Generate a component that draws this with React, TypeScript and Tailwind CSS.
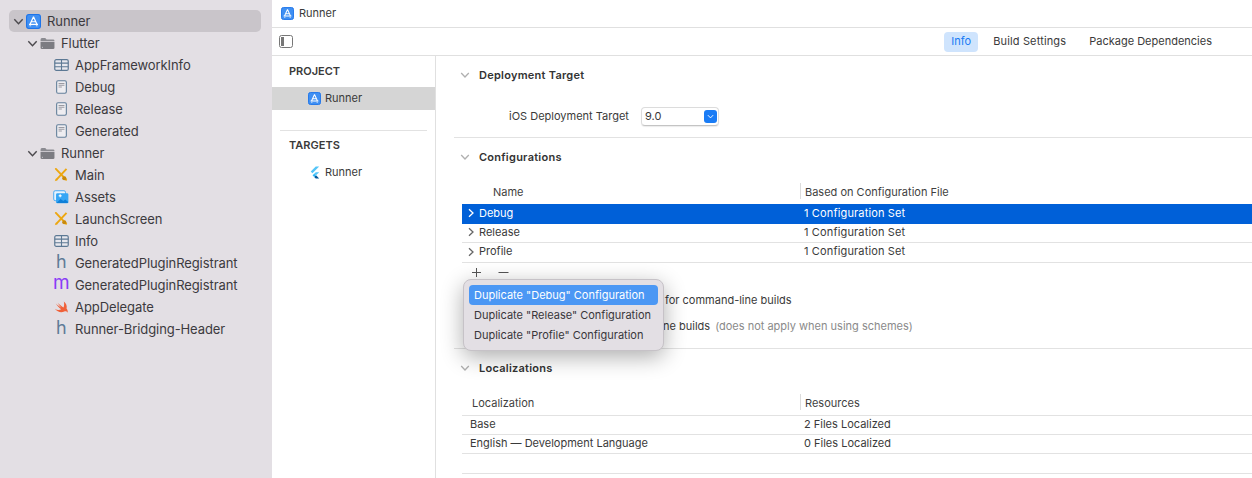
type Kind = 'project' | 'folder' | 'table' | 'doc' | 'xib' | 'assets' | 'h' | 'm' | 'swift';

type NavItem = { name: string; kind: Kind; depth: 0 | 1 | 2; open?: boolean; selected?: boolean };

const navItems: NavItem[] = [
  { name: 'Runner', kind: 'project', depth: 0, open: true, selected: true },
  { name: 'Flutter', kind: 'folder', depth: 1, open: true },
  { name: 'AppFrameworkInfo', kind: 'table', depth: 2 },
  { name: 'Debug', kind: 'doc', depth: 2 },
  { name: 'Release', kind: 'doc', depth: 2 },
  { name: 'Generated', kind: 'doc', depth: 2 },
  { name: 'Runner', kind: 'folder', depth: 1, open: true },
  { name: 'Main', kind: 'xib', depth: 2 },
  { name: 'Assets', kind: 'assets', depth: 2 },
  { name: 'LaunchScreen', kind: 'xib', depth: 2 },
  { name: 'Info', kind: 'table', depth: 2 },
  { name: 'GeneratedPluginRegistrant', kind: 'h', depth: 2 },
  { name: 'GeneratedPluginRegistrant', kind: 'm', depth: 2 },
  { name: 'AppDelegate', kind: 'swift', depth: 2 },
  { name: 'Runner-Bridging-Header', kind: 'h', depth: 2 },
];

const depthPad = { 0: 'pl-[3px]', 1: 'pl-[17px]', 2: 'pl-[31px]' };

function ProjectIcon({ className }: { className: string }) {
  return (
    <svg viewBox="0 0 14 14" className={className}>
      <rect x="0.5" y="0.5" width="13" height="13" rx="2.2" fill="#3f8ff2" stroke="#1c74ea" />
      <path d="M7 2.6 L3.8 9.6 M7 2.6 L10.2 9.6 M2.8 9.6 H11.2 M5 7.2 H9" stroke="#fff" strokeWidth="1.1" fill="none" />
      <path d="M3.2 11 H4.8 M9.2 11 H10.8" stroke="#cfe2fb" strokeWidth="1" />
    </svg>
  );
}

function FlutterIcon() {
  return (
    <svg viewBox="0 0 14 16" className="w-[11px] h-[13px]">
      <polygon points="8.6,0.5 13,0.5 4.4,8.8 2.2,6.7" fill="#54c5f8" />
      <polygon points="8.6,7.6 13,7.6 8.9,11.6 6.6,9.5" fill="#54c5f8" />
      <polygon points="6.6,13.6 8.9,11.6 13,15.5 8.6,15.5" fill="#01579b" />
      <polygon points="4.5,11.6 6.6,9.5 8.9,11.6 6.6,13.7" fill="#29b6f6" />
    </svg>
  );
}

function NavIcon({ kind }: { kind: Kind }) {
  if (kind === 'project') return <ProjectIcon className="w-[15px] h-[15px]" />;
  if (kind === 'folder') {
    return (
      <svg viewBox="0 0 16 14" className="w-[15px] h-[13px]">
        <path d="M0.5 3 Q0.5 1 2 1 H5.6 L7 2.6 H14 Q15.5 2.6 15.5 4 V4.4 H0.5 Z" fill="#8b8b91" />
        <path d="M0.5 5 H15.5 V11.8 Q15.5 13 14 13 H2 Q0.5 13 0.5 11.8 Z" fill="#7c7c82" />
        <rect x="2" y="10.6" width="1" height="1" fill="#d8d8dc" />
      </svg>
    );
  }
  if (kind === 'table') {
    return (
      <svg viewBox="0 0 16 13" className="w-[15px] h-[12px]">
        <rect x="0.7" y="0.7" width="14.6" height="11.6" rx="1.6" fill="#e8e8ee" stroke="#5d7994" strokeWidth="1.3" />
        <path d="M0.7 4.5 H15.3 M0.7 8.4 H15.3 M8 0.7 V12.3" stroke="#5d7994" strokeWidth="1.2" />
      </svg>
    );
  }
  if (kind === 'doc') {
    return (
      <svg viewBox="0 0 12 15" className="ml-[2px] w-[11px] h-[14px]">
        <rect x="0.7" y="0.7" width="10.6" height="13.6" rx="1.5" fill="#eeedf1" stroke="#64809b" strokeWidth="1.2" />
        <path d="M2.8 3.6 H9.2 M2.8 5.6 H9.2 M2.8 7.6 H6.4" stroke="#9a9aa2" strokeWidth="1.1" />
      </svg>
    );
  }
  if (kind === 'xib') {
    return (
      <svg viewBox="0 0 15 15" className="w-[14px] h-[14px]">
        <path d="M2 1 L13 12.6" stroke="#eda711" strokeWidth="2" strokeLinecap="round" />
        <path d="M13.4 1 L2.2 13" stroke="#eda711" strokeWidth="2" />
        <path d="M0.8 14.2 L4 12.8 L2.2 11 Z" fill="#eda711" />
        <circle cx="11" cy="11" r="2.2" fill="#c98a0c" />
      </svg>
    );
  }
  if (kind === 'assets') {
    return (
      <svg viewBox="0 0 17 15" className="-ml-[1px] w-[16px] h-[14px]">
        <rect x="0.7" y="0.8" width="12.6" height="10.6" rx="1.6" fill="#e7f3fd" stroke="#3ea6f3" />
        <rect x="3.2" y="3.4" width="13.2" height="10.8" rx="1.4" fill="#35a6f5" />
        <path d="M3.6 13.8 L8 9.6 L11 11.8 L13 10.2 L16.2 12.8 V13.2 Q16.2 14 15 14 H4.4 Z" fill="#0f7fd8" />
        <rect x="6" y="5.6" width="3.2" height="1.2" fill="#fff" />
        <rect x="7" y="4.6" width="1.2" height="3.2" fill="#fff" />
      </svg>
    );
  }
  if (kind === 'swift') {
    return (
      <svg viewBox="0 0 16 14" className="w-[15px] h-[13px]">
        <path
          d="M10.5 0.5 C13 2.6 14.3 5.5 13.4 8.2 C14.6 9.8 14.9 11.2 14.6 12.6 C13.6 10.9 12.2 10.8 11 11.2 C8 12.8 3.8 12.2 0.8 8.4 C3 9.9 5.6 10.2 7.6 9 C5.2 7.2 3.2 4.8 1.8 2.8 C3.6 4.5 6 6.2 7.9 7.4 C6.2 5.6 4.8 3.6 3.8 1.8 C6 4 8.6 6 10.2 7 C11 5 11 2.8 10.5 0.5 Z"
          fill="#f0613a"
        />
      </svg>
    );
  }
  if (kind === 'm') {
    return <span className="text-[#8a3cf6] text-[19px] leading-[14px] -mt-[5px] ml-[-1px] font-normal">m</span>;
  }
  return <span className="text-[#5f7b97] text-[18px] leading-[14px] -mt-[3px] ml-[2px] font-normal">h</span>;
}

function Chevron({ open, className }: { open: boolean; className: string }) {
  return (
    <svg viewBox="0 0 10 10" className={className} fill="none" stroke="currentColor" strokeWidth="1.3">
      {open ? <path d="M1.2 3 L5 7 L8.8 3" /> : <path d="M3 1.2 L7 5 L3 8.8" />}
    </svg>
  );
}

function Sidebar() {
  return (
    <aside className="w-[272px] shrink-0 bg-[#e3dfe4] pt-[10px] px-[9px] pr-[11px] text-[13px] text-[#3c3a3e] tracking-[-0.08px]">
      {navItems.map((item, i) => (
        <div
          key={i}
          className={`h-[22px] flex items-center rounded-[5px] ${depthPad[item.depth]} ${item.selected ? 'bg-[#c9c5ca]' : ''}`}
        >
          <span className="w-[13px] flex items-center justify-center text-[#4b494d]">
            {item.open && <Chevron open className="w-[11px] h-[11px]" />}
          </span>
          <span className="w-[17px] ml-[1px] flex items-center">
            <NavIcon kind={item.kind} />
          </span>
          <span className="ml-[4px] pt-[2px] whitespace-nowrap">{item.name}</span>
        </div>
      ))}
    </aside>
  );
}

function SectionHeader({ title }: { title: string }) {
  return (
    <div className="h-[38px] flex items-center">
      <Chevron open className="ml-[24px] w-[10px] h-[10px] text-[#b0b0b0]" />
      <span className="ml-[9px] text-[11px] font-semibold text-[#333] tracking-[0.25px]">{title}</span>
    </div>
  );
}

function TableHead({ left, right, leftPad }: { left: string; right: string; leftPad: string }) {
  return (
    <div className="h-[28px] flex items-center pt-[2px] text-[11px] text-[#3f3f3f]">
      <span className={`w-[338px] pt-[2px] ${leftPad}`}>{left}</span>
      <span className="h-[16px] border-l border-[#dcdcdc] pl-[4px] flex items-center pt-[2px]">{right}</span>
    </div>
  );
}

function PlainRow({ a, b, h }: { a: string; b: string; h: string }) {
  return (
    <div className={`${h} flex items-center border-b border-[#e2e2e2] pb-[2px] text-[11px] text-[#3a3a3a]`}>
      <span className="w-[342px] pl-[8px]">{a}</span>
      <span>{b}</span>
    </div>
  );
}

function ConfigRow({ name, h, active }: { name: string; h: string; active?: boolean }) {
  return (
    <div
      className={`${h} flex items-center pb-[2px] text-[11px] ${
        active ? 'bg-[#0060d8] text-white' : 'border-b border-[#e2e2e2] text-[#3a3a3a]'
      }`}
    >
      <Chevron open={false} className={`ml-[4px] w-[10px] h-[10px] ${active ? 'text-white' : 'text-[#666]'}`} />
      <span className="ml-[3px] w-[325px]">{name}</span>
      <span className="tracking-[0.15px]">1 Configuration Set</span>
    </div>
  );
}

function Popup() {
  const items = ['Debug', 'Release', 'Profile'];
  return (
    <div className="absolute left-[463px] top-[279px] w-[201px] h-[72px] rounded-[8px] border border-[#c6c2c7] bg-[#e3dfe4] px-[5px] pt-[5px] shadow-[0_6px_22px_rgba(0,0,0,0.32)] text-[11px] text-[#38363a]">
      {items.map((name, i) => (
        <div
          key={name}
          className={`h-[20px] pl-[5px] flex items-center rounded-[4px] whitespace-nowrap ${
            i === 0 ? 'bg-[#4b97f4] text-white' : ''
          }`}
        >
          Duplicate "{name}" Configuration
        </div>
      ))}
    </div>
  );
}

export default function App() {
  return (
    <div className="relative w-[1252px] h-[478px] overflow-hidden flex bg-white font-[Inter,'Noto_Sans',sans-serif]">
      <Sidebar />

      <main className="flex-1 min-w-0 flex flex-col">
        {/* Breadcrumb */}
        <div className="h-[28px] shrink-0 border-b border-[#e0e0e0] pl-[9px] flex items-center text-[11px] text-[#3a3a3a]">
          <ProjectIcon className="w-[13px] h-[13px]" />
          <span className="ml-[5px]">Runner</span>
        </div>

        {/* Toolbar */}
        <div className="h-[28px] shrink-0 border-b border-[#e0e0e0] flex items-center pl-[7px] pr-[40px] text-[11px] text-[#3a3a3a]">
          <svg viewBox="0 0 14 13" className="w-[14px] h-[13px]">
            <rect x="0.5" y="0.5" width="13" height="12" rx="2" fill="#fff" stroke="#777" />
            <rect x="2" y="2" width="3" height="9" fill="#777" />
          </svg>
          <div className="ml-auto flex items-center">
            <span className="h-[20px] px-[7px] rounded-[4px] bg-[#cfe4fd] text-[#1a7bf4] flex items-center">Info</span>
            <span className="ml-[15px] tracking-[0.15px]">Build Settings</span>
            <span className="ml-[23px]">Package Dependencies</span>
          </div>
        </div>

        <div className="flex-1 min-h-0 flex">
          {/* Project and targets list */}
          <div className="w-[164px] shrink-0 border-r border-[#e0e0e0] text-[11px]">
            <div className="h-[31px] pl-[17px] flex items-center font-semibold text-[#3a3a3a]">PROJECT</div>
            <div className="h-[23px] bg-[#d5d5d5] pl-[36px] flex items-center text-[#3a3a3a]">
              <ProjectIcon className="w-[13px] h-[13px]" />
              <span className="ml-[4px]">Runner</span>
            </div>
            <div className="mx-[8px] mt-[20px] border-t border-[#e2e2e2] h-[23px] pl-[9px] flex items-center font-semibold text-[#3a3a3a] box-content pt-[3px]">
              TARGETS
            </div>
            <div className="mt-[3px] h-[24px] pl-[37px] flex items-center text-[#3a3a3a]">
              <FlutterIcon />
              <span className="ml-[5px]">Runner</span>
            </div>
          </div>

          {/* Settings */}
          <div className="flex-1 min-w-0 pl-[18px]">
            <section className="h-[82px] border-b border-[#e2e2e2]">
              <div className="-ml-[18px]">
                <SectionHeader title="Deployment Target" />
              </div>
              <div className="mt-[13px] ml-[55px] h-[18px] flex items-center text-[11px] text-[#3a3a3a]">
                <span className="w-[132px]">iOS Deployment Target</span>
                <div className="w-[78px] h-[19px] rounded-[4px] border border-[#dcdcdc] border-b-[#c4c4c4] pl-[3px] pr-[1px] flex items-center justify-between shadow-[0_1px_1px_rgba(0,0,0,0.08)]">
                  <span>9.0</span>
                  <span className="w-[13px] h-[13px] rounded-[3px] bg-[#1a7cf5] flex items-center justify-center">
                    <Chevron open className="w-[7px] h-[7px] text-white" />
                  </span>
                </div>
              </div>
            </section>

            <section className="h-[211px] border-b border-[#e2e2e2]">
              <div className="-ml-[18px]">
                <SectionHeader title="Configurations" />
              </div>
              <div className="ml-[8px]">
                <TableHead left="Name" right="Based on Configuration File" leftPad="pl-[31px]" />
                <ConfigRow name="Debug" h="h-[20px]" active />
                <ConfigRow name="Release" h="h-[19px]" />
                <ConfigRow name="Profile" h="h-[20px]" />
                <div className="h-[18px] flex items-center text-[#555] pl-[9px]">
                  <svg viewBox="0 0 11 11" className="w-[11px] h-[11px]" stroke="currentColor" strokeWidth="1">
                    <path d="M5.5 1 V10 M1 5.5 H10" />
                  </svg>
                  <svg viewBox="0 0 11 11" className="ml-[16px] w-[11px] h-[11px]" stroke="currentColor" strokeWidth="1">
                    <path d="M0.5 5.5 H10.5" />
                  </svg>
                </div>
                <div className="mt-[12px] pl-[203px] h-[14px] flex items-center text-[11px] text-[#3a3a3a]">
                  for command-line builds
                </div>
                <div className="mt-[12px] pl-[201px] h-[14px] flex items-center text-[11px] text-[#3a3a3a]">
                  ne builds
                  <span className="ml-[5px] text-[#8a8a8a]">(does not apply when using schemes)</span>
                </div>
              </div>
            </section>

            <section>
              <div className="-ml-[18px]">
                <SectionHeader title="Localizations" />
              </div>
              <div className="ml-[8px]">
                <div className="border-b border-[#e2e2e2]">
                  <TableHead left="Localization" right="Resources" leftPad="pl-[10px]" />
                </div>
                <PlainRow a="Base" b="2 Files Localized" h="h-[19px]" />
                <PlainRow a="English — Development Language" b="0 Files Localized" h="h-[19px]" />
                <div className="h-[20px] border-b border-[#e2e2e2]" />
              </div>
            </section>
          </div>
        </div>
      </main>

      <Popup />
    </div>
  );
}
